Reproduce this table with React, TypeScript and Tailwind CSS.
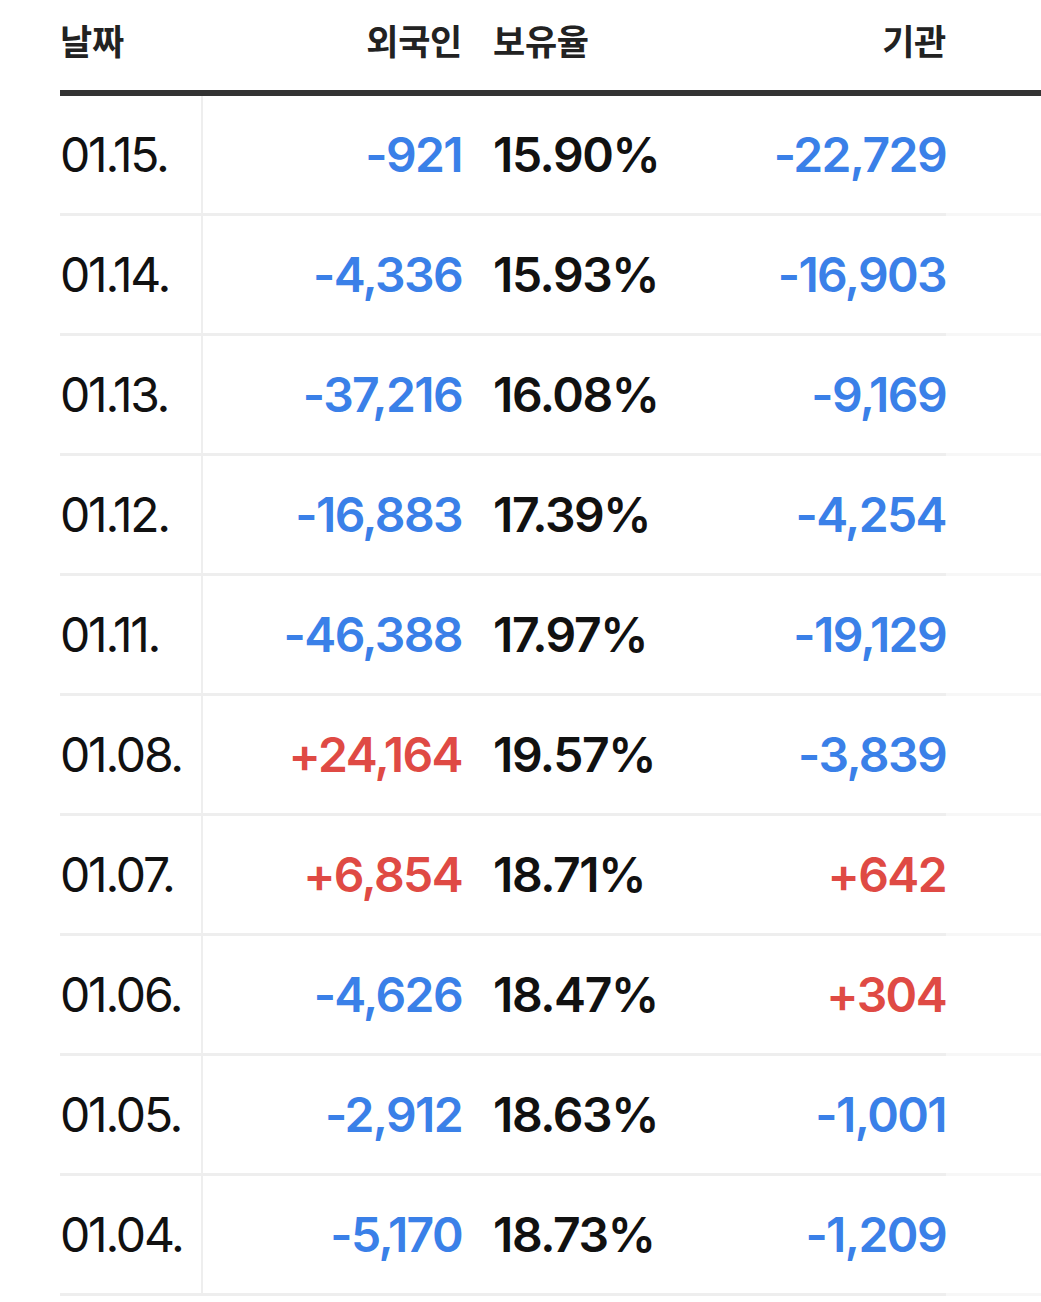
import React from "react";

type Row = { d: string; f: string; p: string; i: string };

const rows: Row[] = [
  { d: "01.15.", f: "-921", p: "15.90%", i: "-22,729" },
  { d: "01.14.", f: "-4,336", p: "15.93%", i: "-16,903" },
  { d: "01.13.", f: "-37,216", p: "16.08%", i: "-9,169" },
  { d: "01.12.", f: "-16,883", p: "17.39%", i: "-4,254" },
  { d: "01.11.", f: "-46,388", p: "17.97%", i: "-19,129" },
  { d: "01.08.", f: "+24,164", p: "19.57%", i: "-3,839" },
  { d: "01.07.", f: "+6,854", p: "18.71%", i: "+642" },
  { d: "01.06.", f: "-4,626", p: "18.47%", i: "+304" },
  { d: "01.05.", f: "-2,912", p: "18.63%", i: "-1,001" },
  { d: "01.04.", f: "-5,170", p: "18.73%", i: "-1,209" },
];

const color = (v: string) => (v.startsWith("+") ? "text-[#df4a44]" : "text-[#3a80e8]");

export default function App() {
  return (
    <div
      className="w-[1041px] h-[1302px] overflow-hidden bg-white pl-[60px]"
      style={{ fontFamily: "Inter, 'Noto Sans CJK KR', sans-serif" }}
    >
      <div className="w-[1200px]">
        <div className="flex h-[96px] items-center border-b-[6px] border-[#333] pb-[10px] text-[35px] font-bold text-[#222] tracking-[-0.3px]" style={{ fontFamily: "'Noto Sans CJK KR', sans-serif" }}>
          <div className="w-[143px]">날짜</div>
          <div className="w-[259px] text-right">외국인</div>
          <div className="w-[238px] pl-[31px]">보유율</div>
          <div className="w-[246px] text-right">기관</div>
        </div>
        <div className="relative">
          {rows.map((r) => (
            <div key={r.d} className="flex h-[120px] items-stretch border-b-[3px] border-[#eeeeee] text-[48px] leading-none">
              <div className="flex w-[143px] items-center border-r-[2px] border-[#eeeeee] font-normal text-[#111] tracking-[-2.2px]">
                {r.d}
              </div>
              <div className={`flex w-[259px] items-center justify-end font-semibold tracking-[-1.6px] ${color(r.f)}`}>{r.f}</div>
              <div className="flex w-[238px] items-center pl-[31px] font-semibold text-[#111] tracking-[-1.4px]">{r.p}</div>
              <div className={`flex w-[246px] items-center justify-end font-semibold tracking-[-1.6px] ${color(r.i)}`}>{r.i}</div>
              <div className="flex-1" />
            </div>
          ))}
          <div className="absolute top-0 bottom-0 left-[886px] w-[200px] bg-white/50" />
        </div>
      </div>
    </div>
  );
}
